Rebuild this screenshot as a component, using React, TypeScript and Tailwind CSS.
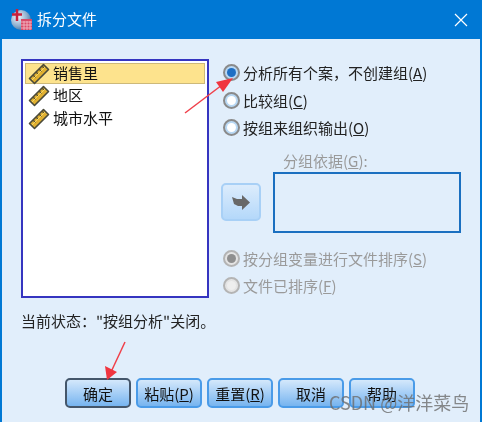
const font = { fontFamily: '"Noto Sans CJK SC", "Liberation Sans", sans-serif' };

const Ruler = () => (
  <svg width="22" height="22" viewBox="0 0 22 22" className="shrink-0">
    <path d="M1.5 15.5 L15.5 1.5 L20.5 6.5 L6.5 20.5 Z" fill="#e0b030" stroke="#4a4a3a" strokeWidth="1.6" strokeLinejoin="round" />
    <path d="M5 12 L7.5 14.5 M8 9 L10 11 M11 6 L13.5 8.500 M14 3 L16 5" stroke="#5a5030" strokeWidth="1.4" />
    <path d="M4 17 L17 4" stroke="#f7d868" strokeWidth="1" />
  </svg>
);

const AppIcon = () => (
  <svg width="24" height="24" viewBox="0 0 24 24" className="shrink-0">
    <defs>
      <radialGradient id="globe" cx="0.35" cy="0.35" r="0.8">
        <stop offset="0" stopColor="#f2f6fa" />
        <stop offset="0.55" stopColor="#8fb0cf" />
        <stop offset="1" stopColor="#2d5f90" />
      </radialGradient>
    </defs>
    <circle cx="10" cy="12" r="10" fill="url(#globe)" />
    <path d="M1 6.500 H11 M6 1 V13" stroke="#c8203c" strokeWidth="2.500" />
    <rect x="10" y="11" width="11" height="11" fill="#d84a68" />
    <path d="M10 14 H21 M10 17 H21 M10 20 H21 M13 13 V22 M16 13 V22 M19 13 V22" stroke="#f5c0cc" strokeWidth="0.8" />
  </svg>
);

const Radio = ({
  label,
  hot,
  checked = false,
  disabled = false,
}: {
  label: string;
  hot: string;
  checked?: boolean;
  disabled?: boolean;
}) => (
  <div className={`flex items-center gap-[3px] h-[27.500px] ${disabled ? "text-[#9a9a9a]" : "text-[#222]"}`}>
    <span
      className={`w-[17px] h-[17px] rounded-full border-2 flex items-center justify-center shrink-0 ${
        disabled ? "border-[#b4b4b4] bg-[#e4e4e4]" : "border-[#8a8a8a] bg-[#b8d8f4]"
      }`}
    >
      {checked ? (
        <span className={`w-[9px] h-[9px] rounded-full ${disabled ? "bg-[#8f8f8f]" : "bg-[#1f6fc4]"}`} />
      ) : (
        <span className={`w-[9px] h-[9px] rounded-full ${disabled ? "bg-[#eeeeee]" : "bg-white"}`} />
      )}
    </span>
    <span className="text-[15px] leading-none whitespace-nowrap">
      {label}(<span className="underline">{hot}</span>)
    </span>
  </div>
);

const Btn = ({ label, hot, primary = false }: { label: string; hot?: string; primary?: boolean }) => (
  <button
    className={`w-[66px] h-[30px] rounded-[5px] border-2 bg-gradient-to-b from-[#d4e8fb] to-[#76b4ef] text-[15px] leading-none text-[#111] ${
      primary ? "border-[#44566a]" : "border-[#4a9be8]"
    }`}
  >
    {label}
    {hot && (
      <>
        (<span className="underline">{hot}</span>)
      </>
    )}
  </button>
);

export default function App() {
  return (
    <div className="w-[482px] h-[422px] flex flex-col relative overflow-hidden blur-[0.35px]" style={font}>
      <div className="h-[39px] bg-[#0078d4] flex items-center pl-[11px] pr-[9px] shrink-0">
        <AppIcon />
        <span className="text-white text-[15px] ml-[2px]">拆分文件</span>
        <svg width="14" height="14" viewBox="0 0 14 14" className="ml-auto mr-[5px]">
          <path d="M1 1 L13 13 M13 1 L1 13" stroke="white" strokeWidth="1.200" />
        </svg>
      </div>
      <div className="flex-1 bg-[#e1eefb] border-x-2 border-[#0078d4] pt-[20px] pl-[19px] pr-[19px] flex flex-col">
        <div className="flex h-[239px] shrink-0">
          <div className="w-[188px] h-[239px] border-2 border-[#3535c0] bg-white p-[2px] shrink-0">
            <div className="h-[21px] flex items-center gap-[3px] pl-[2px] bg-[#fde38d] border border-[#cdb979] text-[15px] text-[#111]">
              <Ruler />
              销售里
            </div>
            <div className="h-[23px] flex items-center gap-[3px] pl-[3px] text-[15px] text-[#111]">
              <Ruler />
              地区
            </div>
            <div className="h-[23px] flex items-center gap-[3px] pl-[3px] text-[15px] text-[#111]">
              <Ruler />
              城市水平
            </div>
          </div>
          <div className="ml-[14px] flex-1">
            <Radio label="分析所有个案，不创建组" hot="A" checked />
            <Radio label="比较组" hot="C" />
            <Radio label="按组来组织输出" hot="O" />
            <div className="ml-[60px] mt-[9px] text-[15px] leading-[20px] text-[#9a9a9a]">
              分组依据(<span className="underline">G</span>):
            </div>
            <div className="flex items-center mt-[1px] -ml-[2px]">
              <div className="w-[40px] h-[38px] rounded-[5px] border-2 border-[#a8d0f6] bg-gradient-to-b from-[#dcecfc] to-[#b4d8fa] flex items-center justify-center">
                <svg width="18" height="15" viewBox="0 0 18 15">
                  <path d="M0 2 L5 4 H10 V0 L18 7.500 L10 15 V11 H6 L2 9 Z" fill="#686868" />
                </svg>
              </div>
              <div className="ml-[12px] w-[188px] h-[61px] border-2 border-[#1a6fc0]" />
            </div>
            <div className="mt-[12px]">
              <Radio label="按分组变量进行文件排序" hot="S" checked disabled />
              <Radio label="文件已排序" hot="F" disabled />
            </div>
          </div>
        </div>
        <div className="mt-[13px] text-[15px] leading-[20px] text-[#222]">当前状态："按组分析"关闭。</div>
        <div className="flex gap-[5px] ml-[44px] mt-[47px]">
          <Btn label="确定" primary />
          <Btn label="粘贴" hot="P" />
          <Btn label="重置" hot="R" />
          <Btn label="取消" />
          <Btn label="帮助" />
        </div>
      </div>

      <svg width="482" height="422" className="absolute inset-0 pointer-events-none">
        <path d="M185 113 L222 85" stroke="#f0404a" strokeWidth="1.500" />
        <path d="M233 78 L216 82 L223 92 Z" fill="#f0353f" />
        <path d="M125 342 L111 372" stroke="#f0404a" strokeWidth="1.500" />
        <path d="M107 380 L105 366 L117 372 Z" fill="#f0353f" />
      </svg>
      <span className="absolute left-[329px] top-[392px] text-[18px] leading-[20px] text-[#6d6d6d]/80 whitespace-nowrap">
        CSDN @洋洋菜鸟
      </span>
    </div>
  );
}
